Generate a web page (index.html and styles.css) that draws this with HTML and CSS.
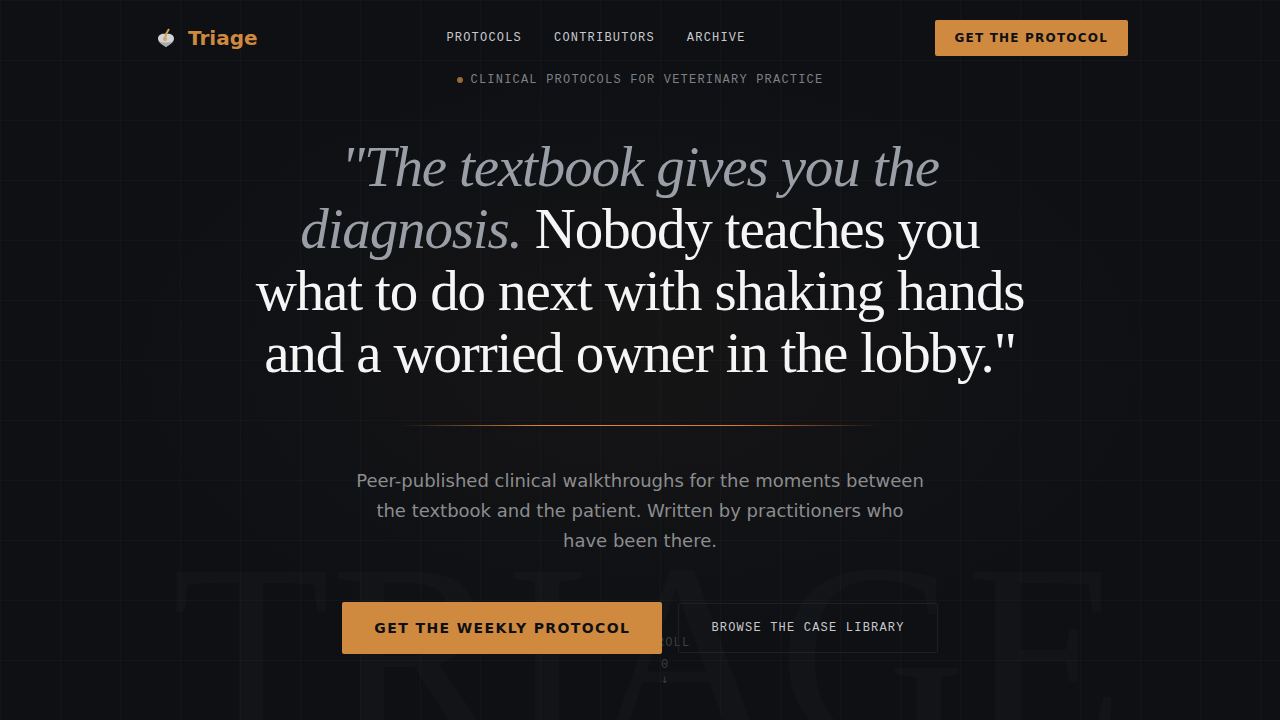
FILE: index.html
```
<!DOCTYPE html>
<html lang="en">
<head>
    <meta charset="UTF-8" />
    <meta name="viewport" content="width=device-width, initial-scale=1" />
    <title>Triage</title>
    <link rel="stylesheet" href="styles.css">
</head>
<body>
    <div class="page">
        <div class="watermark" aria-hidden="true">TRIAGE</div>

        <header class="nav">
            <a class="logo" href="#">
                <svg class="logo-icon" viewBox="0 0 28 28" aria-hidden="true">
                    <path d="M14 10c-4-1-8 1-8 4.500 0 3.500 4 5.500 8 8.500 4-3 8-5 8-8.500 0-3.500-4-5.500-8-4.500z" fill="#d2d3d4" />
                    <path d="M6.500 17c1.500 2.500 4.500 4 7.500 6 3-2 6-3.500 7.500-6-4 2-11 2-15 0z" fill="#a8aaab" />
                    <path d="M13 15l1-5 3-5" fill="none" stroke="#d4a05c" stroke-width="2" />
                    <circle cx="13" cy="15" r="2" fill="#d2a468" />
                </svg>
                <span>Triage</span>
            </a>
            <nav class="nav-links">
                <a href="#protocols">PROTOCOLS</a>
                <a href="#contributors">CONTRIBUTORS</a>
                <a href="#archive">ARCHIVE</a>
            </nav>
            <button type="button" class="btn btn-small">GET THE PROTOCOL</button>
        </header>

        <main class="hero">
            <p class="eyebrow"><span class="dot"></span>CLINICAL PROTOCOLS FOR VETERINARY PRACTICE</p>
            <h1><em>"The textbook gives you the diagnosis.</em> Nobody teaches you what to do next with shaking hands and a worried owner in the lobby."</h1>
            <div class="divider"></div>
            <p class="lead">Peer-published clinical walkthroughs for the moments between the textbook and the patient. Written by practitioners who have been there.</p>
            <div class="actions">
                <button type="button" class="btn btn-large">GET THE WEEKLY PROTOCOL</button>
                <a class="btn-outline" href="#library">BROWSE THE CASE LIBRARY</a>
            </div>
        </main>

        <div class="scroll-hint">
            <span>SCROLL</span>
            <span class="scroll-mark">0<br><span class="arrow">↓</span></span>
        </div>
    </div>
</body>
</html>
```
FILE: styles.css
```
* {
    box-sizing: border-box;
}
body {
    margin: 0;
    background-color: #0e1014;
    color: #f5f5f5;
    font-family: "DejaVu Sans", sans-serif;
}
a {
    color: inherit;
    text-decoration: none;
}
.page {
    position: relative;
    min-height: 100vh;
    overflow: hidden;
    background-image:
        linear-gradient(rgba(255, 255, 255, 0.02) 1px, transparent 1px),
        linear-gradient(90deg, rgba(255, 255, 255, 0.02) 1px, transparent 1px),
        radial-gradient(ellipse at center, rgba(212, 137, 60, 0.04) 0%, transparent 60%);
    background-size: 60px 60px, 60px 60px, 100% 100%;
}
.watermark {
    position: absolute;
    left: 16px;
    right: 0;
    bottom: -64px;
    text-align: center;
    font-family: "Liberation Serif", serif;
    font-size: 260px;
    line-height: 260px;
    white-space: nowrap;
    color: rgba(255, 255, 255, 0.02);
    pointer-events: none;
}

/* top bar */
.nav {
    position: relative;
    z-index: 2;
    display: flex;
    align-items: center;
    justify-content: space-between;
    max-width: 1040px;
    margin: 0 auto;
    padding: 20px 32px 0;
}
.logo {
    display: flex;
    align-items: center;
    gap: 8px;
    font-size: 20px;
    font-weight: bold;
    color: #d08a40;
}
.logo-icon {
    width: 28px;
    height: 28px;
}
.nav-links {
    display: flex;
    gap: 32px;
}
.nav-links,
.eyebrow,
.btn-outline,
.scroll-hint {
    font-family: "Liberation Mono", monospace;
    font-size: 12px;
    letter-spacing: 0.1em;
}
.nav-links {
    color: #c8cacd;
}
.btn {
    border: none;
    border-radius: 2px;
    background-color: #d08a40;
    color: #0e1014;
    font-family: inherit;
    font-weight: bold;
    letter-spacing: 0.1em;
    cursor: pointer;
}
.btn-small {
    height: 36px;
    padding: 0 20px;
    font-size: 12px;
}
.btn-large {
    height: 52px;
    padding: 0 32px;
    font-size: 14px;
}

/* hero */
.hero {
    position: relative;
    z-index: 1;
    display: flex;
    flex-direction: column;
    align-items: center;
    padding: 13px 24px 64px;
    text-align: center;
}
.eyebrow {
    display: flex;
    align-items: center;
    gap: 8px;
    margin: 0 0 45px;
    line-height: 22px;
    color: #7e8083;
}
.dot {
    width: 6px;
    height: 6px;
    border-radius: 50%;
    background-color: #9a6a34;
}
h1 {
    max-width: 780px;
    margin: 0;
    font-family: "Liberation Serif", serif;
    font-size: 57px;
    font-weight: normal;
    line-height: 62px;
    letter-spacing: -0.02em;
}
h1 em {
    color: #9a9ea6;
}
.divider {
    width: 100%;
    max-width: 480px;
    height: 1px;
    margin: 41px 0 40px;
    background: linear-gradient(90deg, transparent, #e08a3c 30%, #e07838 70%, transparent);
}
.lead {
    max-width: 570px;
    margin: 0 0 46px;
    font-size: 18px;
    line-height: 30px;
    color: #8b8d8f;
}
.actions {
    display: flex;
    flex-wrap: wrap;
    align-items: center;
    justify-content: center;
    gap: 16px;
}
.btn-outline {
    padding: 0 32px;
    border: 1px solid #1e2023;
    border-radius: 2px;
    line-height: 48px;
    color: #c8cacd;
}

.scroll-hint {
    position: absolute;
    left: 50%;
    bottom: 33px;
    display: flex;
    flex-direction: column;
    align-items: center;
    gap: 8px;
    line-height: 14px;
    color: #3c3e41;
}
.arrow {
    font-family: "DejaVu Sans Mono", monospace;
}
```
